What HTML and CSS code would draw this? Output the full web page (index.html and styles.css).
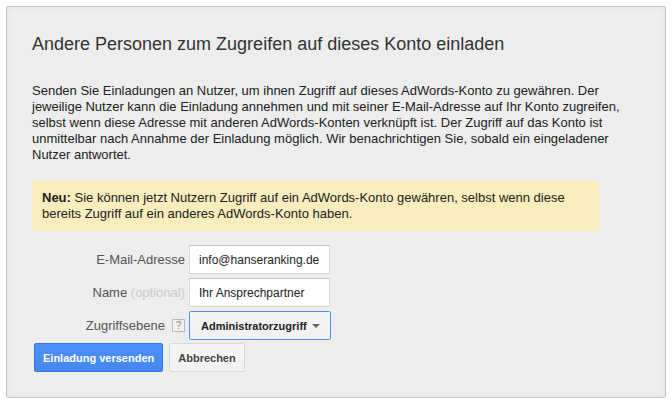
FILE: index.html
```html
<!DOCTYPE html>
<html lang="de">

<head>
    <meta charset="utf-8">
    <meta name="viewport" content="width=device-width, initial-scale=1">
    <title>Andere Personen einladen</title>
    <link rel="stylesheet" href="styles.css">
</head>

<body>
    <main class="panel">
        <h1 class="title">Andere Personen zum Zugreifen auf dieses Konto einladen</h1>
        <p class="intro">Senden Sie Einladungen an Nutzer, um ihnen Zugriff auf dieses AdWords-Konto zu gewähren. Der jeweilige Nutzer kann die Einladung annehmen und mit seiner E-Mail-Adresse auf Ihr Konto zugreifen, selbst wenn diese Adresse mit anderen AdWords-Konten verknüpft ist. Der Zugriff auf das Konto ist unmittelbar nach Annahme der Einladung möglich. Wir benachrichtigen Sie, sobald ein eingeladener Nutzer antwortet.</p>
        <p class="notice"><strong>Neu:</strong> Sie können jetzt Nutzern Zugriff auf ein AdWords-Konto gewähren, selbst wenn diese bereits Zugriff auf ein anderes AdWords-Konto haben.</p>

        <form class="invite">
            <div class="fields">
                <label class="label" for="email">E-Mail-Adresse</label>
                <input class="input" id="email" type="email" value="info@hanseranking.de">

                <label class="label" for="name">Name <span class="optional">(optional)</span></label>
                <input class="input" id="name" type="text" value="Ihr Ansprechpartner">

                <div class="label label-help">
                    <label for="access">Zugriffsebene</label>
                    <button class="help" type="button">?</button>
                </div>
                <div class="dropdown">
                    <select class="select" id="access">
                        <option>Administratorzugriff</option>
                    </select>
                    <svg class="arrow" width="8" height="4" viewBox="0 0 8 4" aria-hidden="true">
                        <path d="M0 0h8L4 4z" fill="#666" />
                    </svg>
                </div>
            </div>

            <div class="actions">
                <button class="button primary" type="submit">Einladung versenden</button>
                <button class="button" type="button">Abbrechen</button>
            </div>
        </form>
    </main>
</body>

</html>
```
FILE: styles.css
```css
* {
    margin: 0;
    padding: 0;
    box-sizing: border-box;
}

body {
    padding: 6px;
    background-color: #fff;
    color: #222;
    font-family: "Liberation Sans", Arial, sans-serif;
    font-size: 13px;
    line-height: 16px;
}

.panel {
    padding: 26px 25px 25px;
    background-color: #ededed;
    border: 1px solid #c6c6c6;
    border-radius: 2px;
    box-shadow: inset 0 0 6px rgba(0, 0, 0, 0.04);
}

.title {
    color: #333;
    font-size: 18px;
    font-weight: normal;
    line-height: 22px;
}

.intro {
    max-width: 600px;
    margin-top: 28px;
}

.notice {
    max-width: 567px;
    margin-top: 18px;
    padding: 9px 10px;
    background-color: #f9edbe;
}

.invite {
    margin-top: 14px;
}

.fields {
    display: grid;
    grid-template-columns: 153px 142px;
    gap: 4px;
    align-items: center;
}

.label {
    color: #555;
    text-align: right;
}

.label-help {
    display: flex;
    justify-content: flex-end;
    align-items: center;
    gap: 7px;
}

.optional {
    color: #ccc;
}

.help {
    width: 13px;
    height: 13px;
    background-color: #f0f0f0;
    border: 1px solid #bbb;
    color: #888;
    font-family: inherit;
    font-size: 10px;
    line-height: 11px;
}

.input {
    width: 141px;
    height: 29px;
    padding: 0 9px;
    background-color: #fff;
    border: 1px solid #d9d9d9;
    border-top-color: #c0c0c0;
    color: #222;
    font-family: inherit;
    font-size: 12px;
}

.dropdown {
    display: grid;
    align-items: center;
}

.select,
.arrow {
    grid-area: 1 / 1;
}

.select {
    height: 29px;
    padding: 0 11px;
    appearance: none;
    background-color: #f3f3f3;
    background-image: linear-gradient(#f5f5f5, #f1f1f1);
    border: 1px solid #4d90fe;
    border-radius: 2px;
    color: #222;
    font-family: inherit;
    font-size: 11px;
    font-weight: bold;
}

.arrow {
    justify-self: end;
    margin-right: 11px;
    pointer-events: none;
}

.actions {
    display: flex;
    gap: 6px;
    margin: 3px 2px 0;
}

.button {
    height: 29px;
    padding: 0 8px;
    background-color: #f3f3f3;
    background-image: linear-gradient(#f5f5f5, #f1f1f1);
    border: 1px solid #d8d8d8;
    border-radius: 2px;
    color: #444;
    font-family: inherit;
    font-size: 11px;
    font-weight: bold;
}

.primary {
    background-color: #4d90fe;
    background-image: linear-gradient(#4d90fe, #4787ed);
    border-color: #3079ed;
    color: #fff;
}
```
